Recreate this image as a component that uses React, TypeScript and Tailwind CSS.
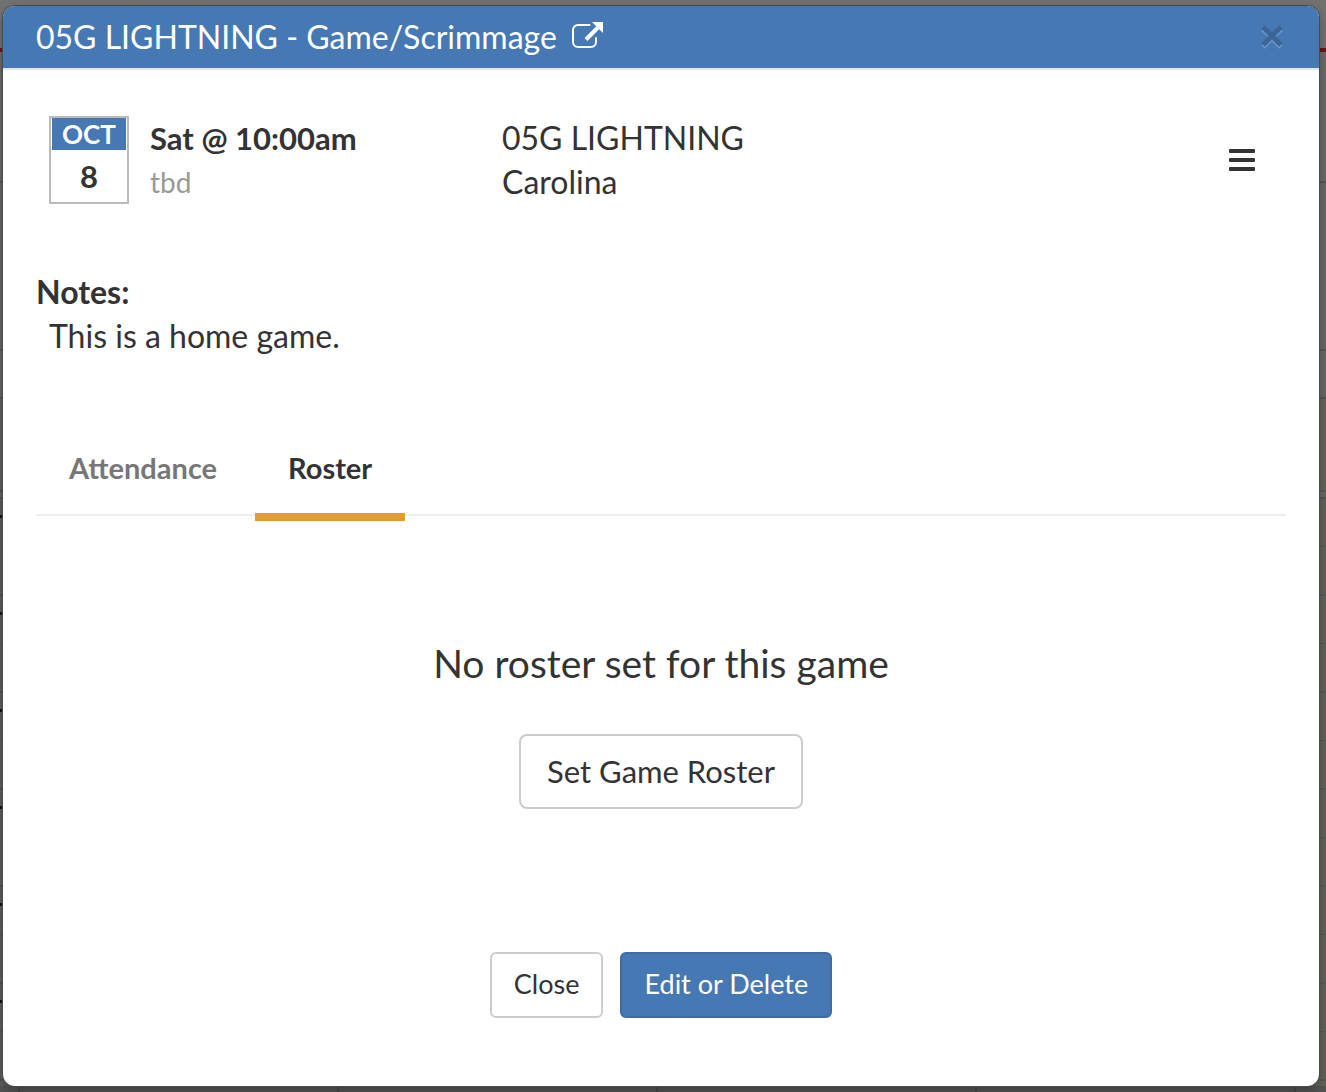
import React, { useState } from 'react';

type Tab = 'Attendance' | 'Roster';

const TABS: Tab[] = ['Attendance', 'Roster'];

const ExternalLinkIcon = () => (
  <svg viewBox="0 0 32 28" className="h-7 w-8" fill="none" aria-hidden="true">
    <path
      d="M17.500 4H6C3.200 4 1 6.200 1 9v12c0 2.800 2.200 5 5 5h13c2.800 0 5-2.200 5-5v-4"
      stroke="currentColor"
      strokeWidth="2"
      strokeLinecap="round"
    />
    <path d="M14 18.500 26 6.500" stroke="currentColor" strokeWidth="4" />
    <path d="M20 1h11v11z" fill="currentColor" />
  </svg>
);

const MenuIcon = () => (
  <svg viewBox="0 0 28 24" className="h-6 w-7" fill="currentColor" aria-hidden="true">
    <rect x="1" y="1" width="26" height="4" rx="1" />
    <rect x="1" y="10" width="26" height="4" rx="1" />
    <rect x="1" y="19" width="26" height="4" rx="1" />
  </svg>
);

const CloseIcon = () => (
  <svg viewBox="0 0 24 26" className="h-[26px] w-6" fill="none" strokeWidth="5" aria-hidden="true">
    <path d="M3 5 21 23M21 5 3 23" stroke="#6f97c8" />
    <path d="M3 3 21 21M21 3 3 21" stroke="#3c669b" />
  </svg>
);

// Dimmed calendar page that stays visible around the dialog
const Backdrop = () => (
  <div className="absolute inset-0 flex flex-col overflow-hidden bg-[#666666]" aria-hidden="true">
    <div className="h-12 shrink-0 bg-[#727272]" />
    <div className="h-1 shrink-0 bg-[#6e160c]" />
    <div className="h-[131px] shrink-0 border-b-2 border-[#565656] bg-[#6a6a6a]" />
    <div className="h-[168px] shrink-0 border-b-2 border-[#565656]" />
    <div className="h-12 shrink-0 border-b-2 border-[#565656]" />
    <div className="flex h-[93px] shrink-0">
      <div className="flex-1 border-b-2 border-[#505050] bg-[#606060]" />
      <div className="flex-1 border-b-2 border-[#555a5a] bg-[#65645a]" />
    </div>
    <div className="h-[7px] shrink-0 border-b-2 border-[#555555] bg-[#666666]" />
    {Array.from({ length: 7 }, (_, i) => (
      <div key={i} className="flex h-[97px] shrink-0">
        <div className="flex flex-1 flex-col bg-[#5e5e5e]">
          <div className="mt-4 h-[3px] w-[3px] bg-[#111111]" />
          <div className="h-[29px] border-b border-[#505050]" />
          <div className="flex-1 border-b-2 border-[#505050]" />
        </div>
        <div className="flex flex-1 flex-col bg-[#626158]">
          <div className="h-12 border-b border-[#555a5a]" />
          <div className="flex-1 border-b-2 border-[#555a5a]" />
        </div>
      </div>
    ))}
    <div className="absolute inset-x-0 bottom-0 flex h-1.5 bg-[#545353] pl-[18px]">
      {Array.from({ length: 5 }, (_, i) => (
        <div key={i} className="w-[319px] shrink-0 border-l-2 border-[#484848]" />
      ))}
    </div>
  </div>
);

const DateBadge = ({ month, day }: { month: string, day: string }) => (
  <div className="flex h-[88px] w-20 flex-col border-2 border-[#bbbbbb] text-center font-bold">
    <div className="mx-px h-[33px] bg-[#4678b3] text-[26px] leading-8 text-white">{month}</div>
    <div className="text-[31px] leading-[52px]">{day}</div>
  </div>
);

export default function App() {
  const [tab, setTab] = useState<Tab>('Roster');

  return (
    <div className="relative flex min-h-screen flex-col pt-1.5 pr-[7px] pb-1.5 pl-[3px] font-['Lato',sans-serif] text-[#333333]">
      <Backdrop />
      <div
        role="dialog"
        aria-labelledby="dialog-title"
        className="relative flex flex-1 flex-col overflow-hidden rounded-xl bg-white shadow-[0_0_0_1px_#4a4a4a,0_4px_12px_rgba(0,0,0,0.3)]"
      >
        <header className="flex h-16 items-center justify-between border-b-2 border-[#e5e5e5] bg-[#4678b3] pr-[35px] pl-[33px] text-white">
          <h1 id="dialog-title" className="flex items-center text-[32px] leading-[44px]">
            05G LIGHTNING - Game/Scrimmage
            <a href="#event" aria-label="Open event page" className="ml-[15px] pb-1"><ExternalLinkIcon /></a>
          </h1>
          <button type="button" aria-label="Close dialog"><CloseIcon /></button>
        </header>

        <div className="flex flex-1 flex-col px-[33px]">
          {/* Event summary */}
          <div className="mt-[46px] flex items-center pl-[13px]">
            <DateBadge month="OCT" day="8" />
            <div className="ml-[21px] w-[352px]">
              <div className="text-[31px] leading-[44px] font-bold">Sat @ 10:00am</div>
              <div className="text-[28px] leading-[44px] text-[#999999]">tbd</div>
            </div>
            <div className="flex-1 text-[32px] leading-[44px]">
              <div>05G LIGHTNING</div>
              <div>Carolina</div>
            </div>
            <button type="button" aria-label="Game menu" className="mr-[30px]"><MenuIcon /></button>
          </div>

          {/* Notes */}
          <div className="mt-[66px] text-[32px] leading-[44px]">
            <h2 className="font-bold">Notes:</h2>
            <p className="pl-[13px]">This is a home game.</p>
          </div>

          {/* Tabs */}
          <div role="tablist" className="mt-[66px] flex gap-[5px] border-b-2 border-[#eeeeee]">
            {TABS.map((name) => (
              <button
                key={name}
                type="button"
                role="tab"
                aria-selected={tab === name}
                onClick={() => setTab(name)}
                className={`-mb-[7px] h-[97px] border-b-8 px-[33px] pb-0.5 text-[29px] font-bold ${
                  tab === name ? 'border-[#e39b37]' : 'border-transparent text-[#777777]'
                }`}
              >
                {name}
              </button>
            ))}
          </div>

          <div className="mt-[120px] flex flex-col items-center">
            <p className="text-[39px] leading-[54px]">No roster set for this game</p>
            <button
              type="button"
              className="mt-11 h-[75px] rounded-lg border-2 border-[#cccccc] px-[26px] text-[31px]"
            >
              Set Game Roster
            </button>
          </div>

          <div className="mt-auto mb-[68px] flex justify-center gap-[17px] text-[27px]">
            <button type="button" className="h-[66px] rounded-md border-2 border-[#cccccc] px-[22px] pb-0.5">
              Close
            </button>
            <button type="button" className="h-[66px] rounded-md border-2 border-[#3f6ca1] bg-[#4678b3] px-[22px] pb-0.5 text-white">
              Edit or Delete
            </button>
          </div>
        </div>
      </div>
    </div>
  );
}
